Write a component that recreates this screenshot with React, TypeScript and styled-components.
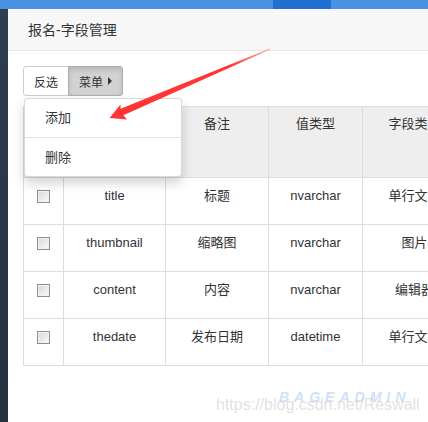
import React from 'react';
import styled, { createGlobalStyle } from 'styled-components';

const GlobalStyle = createGlobalStyle`
  html, body {
    margin: 0;
    padding: 0;
    overflow: hidden;
    background: #fff;
  }
  body {
    font-family: "Liberation Sans", "Noto Sans CJK SC", sans-serif;
    color: #333;
  }
`;

interface Field {
  name: string;
  remark: string;
  valueType: string;
  fieldType: string;
}

const fields: Field[] = [
  { name: 'title', remark: '标题', valueType: 'nvarchar', fieldType: '单行文本' },
  { name: 'thumbnail', remark: '缩略图', valueType: 'nvarchar', fieldType: '图片' },
  { name: 'content', remark: '内容', valueType: 'nvarchar', fieldType: '编辑器' },
  { name: 'thedate', remark: '发布日期', valueType: 'datetime', fieldType: '单行文本' },
];

const colWidths = [40, 102, 103, 94, 104, 150];

export default function App() {
  return (
    <Page>
      <GlobalStyle />
      <TopBar>
        <TopTab />
      </TopBar>
      <Body>
        <Sidebar />
        <Main>
          <PageHeader>报名-字段管理</PageHeader>
          <Content>
            <Toolbar>
              <Btn>反选</Btn>
              <Btn active>
                菜单
                <Caret />
              </Btn>
              <DropMenu>
                <MenuItem>添加</MenuItem>
                <Divider />
                <MenuItem>删除</MenuItem>
              </DropMenu>
            </Toolbar>
            <Table>
              <colgroup>
                {colWidths.map((w, i) => (
                  <col key={`col-${i}`} style={{ width: w }} />
                ))}
              </colgroup>
              <thead>
                <tr>
                  <Th>
                    <Check />
                  </Th>
                  <Th>字段名</Th>
                  <Th>备注</Th>
                  <Th>值类型</Th>
                  <Th>字段类型</Th>
                  <Th>操作</Th>
                </tr>
              </thead>
              <tbody>
                {fields.map(f => (
                  <tr key={f.name}>
                    <Td>
                      <Check />
                    </Td>
                    <Td>{f.name}</Td>
                    <Td>{f.remark}</Td>
                    <Td>{f.valueType}</Td>
                    <Td>{f.fieldType}</Td>
                    <Td>编辑</Td>
                  </tr>
                ))}
              </tbody>
            </Table>
          </Content>
        </Main>
      </Body>

      <Overlay width="428" height="422" viewBox="0 0 428 422">
        <defs>
          <linearGradient id="arrowFade" x1="110" y1="118" x2="270" y2="49" gradientUnits="userSpaceOnUse">
            <stop offset="0" stopColor="#ff3535" />
            <stop offset="0.75" stopColor="#ff3535" />
            <stop offset="1" stopColor="#ff3535" stopOpacity="0.35" />
          </linearGradient>
        </defs>
        <polygon
          points="109.5,118 120.5,104.5 120.6,108.8 269.8,48.6 270.2,49.4 123.4,115.2 127,119.5"
          fill="url(#arrowFade)"
        />
      </Overlay>
      <BrandMark>BAGEADMIN</BrandMark>
      <Watermark>https://blog.csdn.net/Reswall</Watermark>
    </Page>
  );
}

const Page = styled.div`
  position: relative;
  height: 100vh;
  display: flex;
  flex-direction: column;
`;

const TopBar = styled.div`
  height: 9px;
  flex-shrink: 0;
  display: flex;
  padding-left: 273px;
  background: #4b91e3;
`;

const TopTab = styled.div`
  width: 58px;
  background: #1f70d0;
`;

const Body = styled.div`
  flex: 1;
  display: flex;
  min-height: 0;
`;

const Sidebar = styled.div`
  width: 8px;
  flex-shrink: 0;
  background: linear-gradient(#2d3e50, #24313f);
`;

const Main = styled.div`
  flex: 1;
  min-width: 0;
  overflow: hidden;
`;

const PageHeader = styled.div`
  height: 41px;
  line-height: 42px;
  padding-left: 20px;
  font-size: 14px;
  color: #333;
  background: #f7f7f7;
  border-bottom: 1px solid #e6e6e6;
`;

const Content = styled.div`
  padding: 15px;
`;

const Toolbar = styled.div`
  position: relative;
  display: flex;
  height: 30px;
  margin-bottom: 10px;
`;

const Btn = styled.div<{ active?: boolean }>`
  display: flex;
  align-items: center;
  height: 30px;
  box-sizing: border-box;
  padding: 0 10px;
  font-size: 12px;
  color: #333;
  background: ${p => (p.active ? '#d2d2d2' : '#fff')};
  border: 1px solid ${p => (p.active ? '#adadad' : '#ccc')};
  box-shadow: ${p => (p.active ? 'inset 0 3px 5px rgba(0,0,0,.125)' : 'none')};
  & + & {
    margin-left: -1px;
  }
  &:first-child {
    border-radius: 3px 0 0 3px;
  }
  &:nth-child(2) {
    border-radius: 0 3px 3px 0;
  }
`;

const Caret = styled.span`
  width: 0;
  height: 0;
  margin-left: 5px;
  border-left: 4px solid #333;
  border-top: 4px solid transparent;
  border-bottom: 4px solid transparent;
`;

const DropMenu = styled.div`
  position: absolute;
  top: 32px;
  left: 1px;
  z-index: 10;
  width: 158px;
  box-sizing: border-box;
  background: #fff;
  border: 1px solid rgba(0, 0, 0, 0.15);
  border-radius: 4px;
  box-shadow: 0 6px 12px rgba(0, 0, 0, 0.175);
`;

const MenuItem = styled.div`
  height: 37px;
  line-height: 37px;
  padding-left: 20px;
  font-size: 13px;
  color: #333;
`;

const Divider = styled.div`
  height: 1px;
  margin: 1px 0;
  background: #e5e5e5;
`;

const Table = styled.table`
  width: 593px;
  table-layout: fixed;
  border-collapse: collapse;
  font-size: 13px;
  color: #333;
`;

const Th = styled.th`
  height: 71px;
  box-sizing: border-box;
  padding: 7px 8px;
  vertical-align: top;
  text-align: center;
  font-weight: normal;
  line-height: 20px;
  background: #eee;
  border: 1px solid #ddd;
  white-space: nowrap;
`;

const Td = styled.td`
  height: 47px;
  padding: 8px;
  box-sizing: border-box;
  vertical-align: top;
  text-align: center;
  line-height: 20px;
  border: 1px solid #ddd;
  white-space: nowrap;
`;

const Check = styled.span`
  display: inline-block;
  width: 13px;
  height: 13px;
  margin-top: 4px;
  box-sizing: border-box;
  border: 1px solid #8e8e8e;
  background: linear-gradient(135deg, #d6d6d6, #fbfbfb);
  box-shadow: inset 0 0 0 1px #f2f2f2;
  vertical-align: top;
`;

const Overlay = styled.svg`
  position: absolute;
  left: 0;
  top: 0;
  pointer-events: none;
  z-index: 20;
`;

const BrandMark = styled.div`
  position: absolute;
  left: 279px;
  top: 389px;
  z-index: 20;
  font-size: 14px;
  font-weight: bold;
  font-style: italic;
  letter-spacing: 5px;
  color: #cfe2f8;
  pointer-events: none;
`;

const Watermark = styled.div`
  position: absolute;
  left: 216px;
  top: 396px;
  z-index: 21;
  font-size: 16px;
  line-height: 18px;
  color: rgba(200, 200, 200, 0.55);
  pointer-events: none;
`;
